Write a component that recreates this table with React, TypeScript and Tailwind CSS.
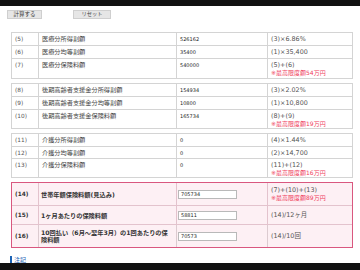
import React from "react";

type R = { n: string; label: string; value: string; formula: string; note?: string; h: string };

const tableA: R[] = [
  { n: "(5)", label: "医療分所得割額", value: "526162", formula: "(3)×6.86%", h: "h-[13px]" },
  { n: "(6)", label: "医療分均等割額", value: "35400", formula: "(1)×35,400", h: "h-[13px]" },
  { n: "(7)", label: "医療分保険料額", value: "540000", formula: "(5)+(6)", note: "※最高限度額54万円", h: "h-[20px]" },
];
const tableB: R[] = [
  { n: "(8)", label: "後期高齢者支援金分所得割額", value: "154934", formula: "(3)×2.02%", h: "h-[13px]" },
  { n: "(9)", label: "後期高齢者支援金分均等割額", value: "10800", formula: "(1)×10,800", h: "h-[13px]" },
  { n: "(10)", label: "後期高齢者支援金保険料額", value: "165734", formula: "(8)+(9)", note: "※最高限度額19万円", h: "h-[19px]" },
];
const tableC: R[] = [
  { n: "(11)", label: "介護分所得割額", value: "0", formula: "(4)×1.44%", h: "h-[13px]" },
  { n: "(12)", label: "介護分均等割額", value: "0", formula: "(2)×14,700", h: "h-[12px]" },
  { n: "(13)", label: "介護分保険料額", value: "0", formula: "(11)+(12)", note: "※最高限度額16万円", h: "h-[19px]" },
];

const cell = "border-r border-b border-[#d4d4d4] px-[3px] pt-[2px] leading-[8px]";

function Plain({ rows }: { rows: R[] }) {
  return (
    <div className="ml-[11px] w-[342px] border-t border-l border-[#d4d4d4] bg-white">
      {rows.map((r) => (
        <div key={r.n} className={`grid grid-cols-[27px_138px_91px_85px] ${r.h}`}>
          <div className={`${cell} text-[5.8px] text-[#555]`}>{r.n}</div>
          <div className={`${cell} text-[6.2px] text-[#444] whitespace-nowrap`}>{r.label}</div>
          <div className={`${cell} text-[5px] text-[#222]`}>{r.value}</div>
          <div className={`${cell} text-[6.4px] text-[#555] whitespace-nowrap`}>
            <div>{r.formula}</div>
            {r.note && <div className="text-[6px] text-[#ef3d5c]">{r.note}</div>}
          </div>
        </div>
      ))}
    </div>
  );
}

type P = { n: string; label: React.ReactNode; value: string; formula: string; note?: string; h: string; last?: boolean };
const pinkRows: P[] = [
  { n: "(14)", label: "世帯年額保険料額(見込み)", value: "705734", formula: "(7)+(10)+(13)", note: "※最高限度額89万円", h: "h-[23px]" },
  { n: "(15)", label: "1ヶ月あたりの保険料額", value: "58811", formula: "(14)/12ヶ月", h: "h-[19px]" },
  {
    n: "(16)",
    label: (
      <>
        10回払い（6月～翌年3月）の1回あたりの保
        <br />
        険料額
      </>
    ),
    value: "70573",
    formula: "(14)/10回",
    h: "h-[22px]",
    last: true,
  },
];

function Pink() {
  return (
    <div className="ml-[11px] w-[342px] border border-[#d9577f] bg-[#fdf0f4]">
      {pinkRows.map((r) => {
        const b = r.last ? "" : "border-b border-[#e3c3cd]";
        return (
          <div key={r.n} className={`grid grid-cols-[27px_138px_91px_84px] ${r.h}`}>
            <div className={`flex items-center border-r border-[#dccbd0] ${b} pl-[3px] text-[5.8px] font-bold text-[#333]`}>{r.n}</div>
            <div className={`flex items-center border-r border-[#dccbd0] ${b} px-[2px] text-[6.2px] font-bold leading-[7px] text-[#333] whitespace-nowrap`}>
              <div>{r.label}</div>
            </div>
            <div className={`flex items-center border-r border-[#dccbd0] ${b} pl-[1px]`}>
              <div className="flex h-[9px] w-[59px] items-center border border-[#b9b9b9] bg-white pl-[2px] text-[5px] leading-[7px] text-[#222]">
                {r.value}
              </div>
            </div>
            <div className={`flex flex-col justify-center ${b} px-[3px] text-[6.4px] leading-[8px] text-[#555] whitespace-nowrap`}>
              <div>{r.formula}</div>
              {r.note && <div className="text-[6px] text-[#ef3d5c]">{r.note}</div>}
            </div>
          </div>
        );
      })}
    </div>
  );
}

export default function App() {
  return (
    <div className="h-[270px] w-[360px] overflow-hidden bg-white font-['DejaVu_Sans','Noto_Sans_CJK_JP',sans-serif]">
      <div className="h-[6px] bg-[#111]" />
      <div className="mt-[4px] flex h-[9px] items-start">
        <div className="ml-[7px] flex h-[9px] w-[35px] items-center justify-center border border-[#cfcfcf] bg-[#e6e6e6] text-[5.5px] leading-none text-[#333]">
          計算する
        </div>
        <div className="ml-[31px] flex h-[9px] w-[38px] items-center justify-center border border-[#cfcfcf] bg-[#e6e6e6] text-[5.3px] leading-none text-[#444]">
          リセット
        </div>
      </div>
      <div className="mt-[13px]">
        <Plain rows={tableA} />
      </div>
      <div className="mt-[4px]">
        <Plain rows={tableB} />
      </div>
      <div className="mt-[4px]">
        <Plain rows={tableC} />
      </div>
      <div className="mt-[4px]">
        <Pink />
      </div>
      <div className="mt-[7px] flex h-[8px] items-center pl-[10px]">
        <div className="h-[7px] w-[2px] bg-[#1b63b5]" />
        <div className="ml-[2px] text-[6px] leading-[7px] text-[#1b63b5]">注記</div>
      </div>
      <div className="h-[8px] bg-[#111]" />
    </div>
  );
}
